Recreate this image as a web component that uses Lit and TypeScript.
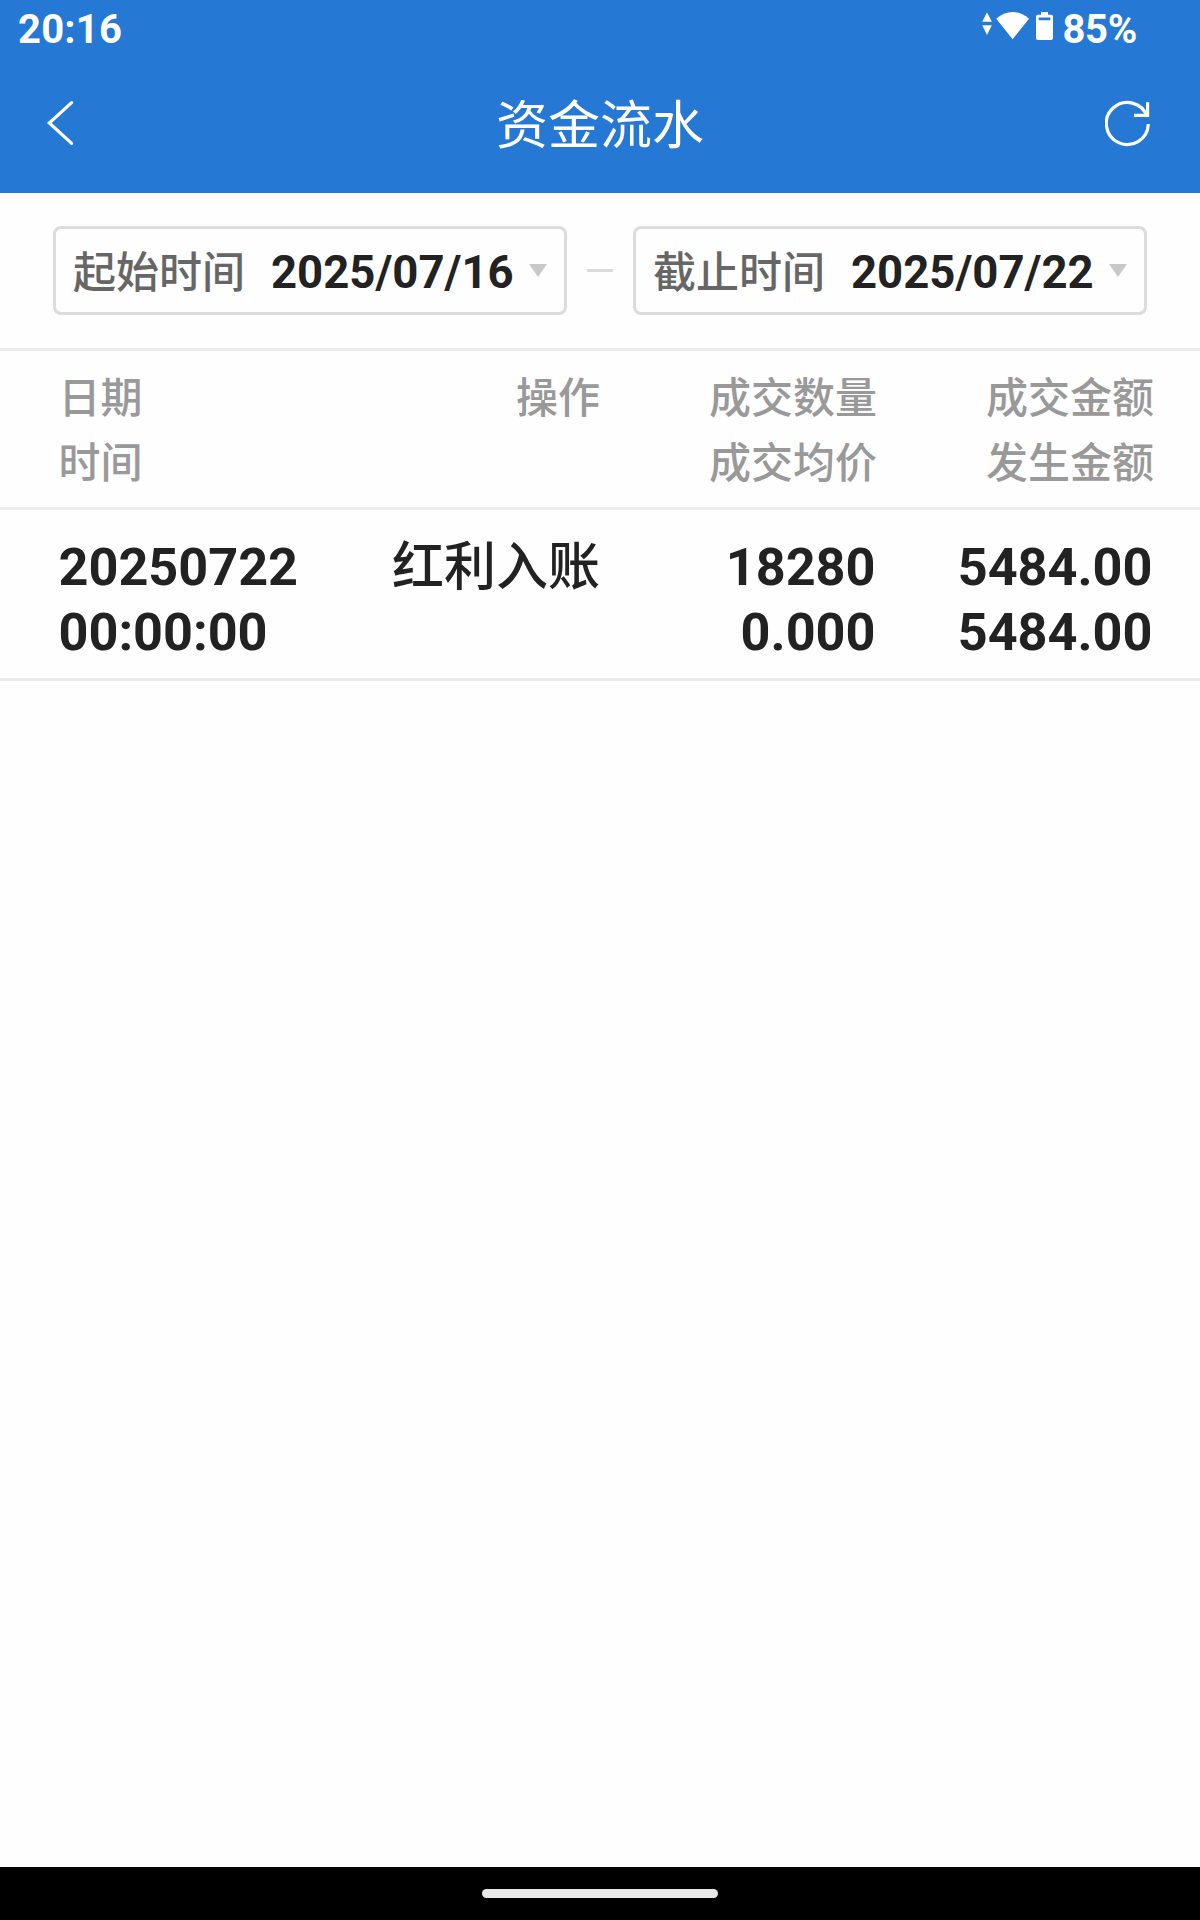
import { LitElement, html, css } from "lit";
import { customElement, property } from "lit/decorators.js";

@customElement("status-bar")
class StatusBar extends LitElement {
  static styles = css`
    :host {
      display: flex;
      justify-content: space-between;
      height: 56px;
      padding: 0 63px 0 18px;
      color: #fff;
      font: 700 40px/60px Roboto, "Noto Sans CJK SC", sans-serif;
    }
    .right {
      display: flex;
    }
    .icons {
      display: block;
      margin-right: 6px;
    }
    .time {
      letter-spacing: 0.2px;
    }
    .level {
      letter-spacing: -0.3px;
    }
  `;
  render() {
    return html`
      <span class="time">20:16</span>
      <span class="right">
        <svg class="icons" width="76" height="56" viewBox="980 0 76 56" fill="#fff">
          <path d="M987 12.3l4.8 9.4h-9.6zM982.2 25.3h9.6l-4.8 9.6z" />
          <path d="M996.3 18.8Q1003.5 12 1012.6 12T1029 18.8L1012.6 39.3z" />
          <path
            fill-rule="evenodd"
            d="M1041 12h7v2.8h3.2q1.8 0 1.8 1.8v21.6q0 1.8-1.8 1.8h-13.4q-1.8 0-1.8-1.8v-21.6q0-1.8 1.8-1.8h3.2zM1038.7 17.4v2.9h11.6v-2.9z"
          />
        </svg>
        <span class="level">85%</span>
      </span>
    `;
  }
}

@customElement("nav-bar")
class NavBar extends LitElement {
  @property() heading = "";
  static styles = css`
    :host {
      display: flex;
      align-items: center;
      justify-content: space-between;
      height: 137px;
      box-sizing: border-box;
      padding: 0 45px 1px;
      color: #fff;
    }
    .title {
      padding-top: 6px;
      font: 400 52px/80px Roboto, "Noto Sans CJK SC", sans-serif;
    }
    svg {
      display: block;
      fill: none;
      stroke: #fff;
      stroke-width: 3.2;
    }
  `;
  render() {
    return html`
      <svg width="50" height="50" viewBox="45 99 50 50" stroke-linecap="round">
        <path d="M71.6 102.6L49.3 123L71.6 143.4" />
      </svg>
      <span class="title">${this.heading}</span>
      <svg width="50" height="50" viewBox="1105 99 50 50">
        <path d="M1148.3 124A21 21 0 1 1 1147.1 116.5M1134 115.4H1147.6V102.2" />
      </svg>
    `;
  }
}

@customElement("date-field")
class DateField extends LitElement {
  @property() label = "";
  @property() value = "";
  static styles = css`
    :host {
      display: flex;
      align-items: center;
      box-sizing: border-box;
      width: 514px;
      height: 89px;
      padding: 0 17px 0 17px;
      border: 3px solid #dcdcdc;
      border-radius: 8px;
      font-family: Roboto, "Noto Sans CJK SC", sans-serif;
    }
    .label {
      padding-top: 5px;
      color: #666;
      font-size: 43px;
      font-weight: 500;
      line-height: 78px;
    }
    .value {
      margin-left: 26px;
      padding-top: 4px;
      color: #222;
      font-size: 45.5px;
      font-weight: 700;
      line-height: 79px;
    }
    .arrow {
      display: block;
      margin-left: auto;
    }
  `;
  render() {
    return html`
      <span class="label">${this.label}</span>
      <span class="value">${this.value}</span>
      <svg class="arrow" width="18" height="13" viewBox="0 0 18 13">
        <path d="M0 0H18L9 13z" fill="#c8c8c8" />
      </svg>
    `;
  }
}

type Cell = [string, string];

@customElement("flow-row")
class FlowRow extends LitElement {
  @property({ attribute: false }) cells: Cell[] = [];
  @property({ reflect: true }) kind = "data";
  static styles = css`
    :host {
      display: grid;
      grid-template-columns: 240px 301.5px 277px 277px;
      box-sizing: border-box;
      padding-left: 58.5px;
      border-bottom: 3px solid #ececec;
      font-family: Roboto, "Noto Sans CJK SC", sans-serif;
      line-height: 65px;
    }
    :host([kind="head"]) {
      height: 159px;
      padding-top: 15px;
      color: #999;
      font-size: 42px;
      font-weight: 500;
    }
    :host([kind="data"]) {
      height: 171px;
      padding-top: 25px;
      color: #222;
      font-size: 52.2px;
      font-weight: 700;
    }
    .cell {
      display: flex;
      flex-direction: column;
      text-align: right;
    }
    .cell:first-child {
      text-align: left;
    }
    .line {
      height: 65px;
      white-space: nowrap;
    }
    :host([kind="data"]) .cell:nth-child(2) {
      font-size: 52px;
      font-weight: 500;
    }
    :host([kind="data"]) .cell:nth-child(n + 3) {
      padding-right: 1.5px;
    }
  `;
  render() {
    return this.cells.map(
      (cell) => html`<div class="cell">${cell.map((t) => html`<span class="line">${t}</span>`)}</div>`
    );
  }
}

@customElement("app-root")
class AppRoot extends LitElement {
  static styles = css`
    :host {
      display: flex;
      flex-direction: column;
      width: 1200px;
      height: 1920px;
      background: #fefefe;
    }
    .top {
      height: 193px;
      background: #2578d3;
    }
    .filter {
      display: flex;
      align-items: center;
      justify-content: space-between;
      box-sizing: border-box;
      height: 158px;
      padding: 0 53px;
      border-bottom: 3px solid #ececec;
    }
    .dash {
      width: 26px;
      height: 3px;
      background: #dcdcdc;
    }
    .list {
      flex: 1;
    }
    .gesture {
      display: flex;
      justify-content: center;
      align-items: center;
      height: 53px;
      background: #000;
    }
    .pill {
      width: 236px;
      height: 9px;
      border-radius: 5px;
      background: #e8e8e8;
    }
  `;
  private head: Cell[] = [
    ["日期", "时间"],
    ["操作", ""],
    ["成交数量", "成交均价"],
    ["成交金额", "发生金额"],
  ];
  private rows: Cell[][] = [
    [
      ["20250722", "00:00:00"],
      ["红利入账", ""],
      ["18280", "0.000"],
      ["5484.00", "5484.00"],
    ],
  ];
  render() {
    return html`
      <header class="top">
        <status-bar></status-bar>
        <nav-bar heading="资金流水"></nav-bar>
      </header>
      <section class="filter">
        <date-field label="起始时间" value="2025/07/16"></date-field>
        <span class="dash"></span>
        <date-field label="截止时间" value="2025/07/22"></date-field>
      </section>
      <main class="list">
        <flow-row kind="head" .cells=${this.head}></flow-row>
        ${this.rows.map((r) => html`<flow-row kind="data" .cells=${r}></flow-row>`)}
      </main>
      <footer class="gesture"><span class="pill"></span></footer>
    `;
  }
}
